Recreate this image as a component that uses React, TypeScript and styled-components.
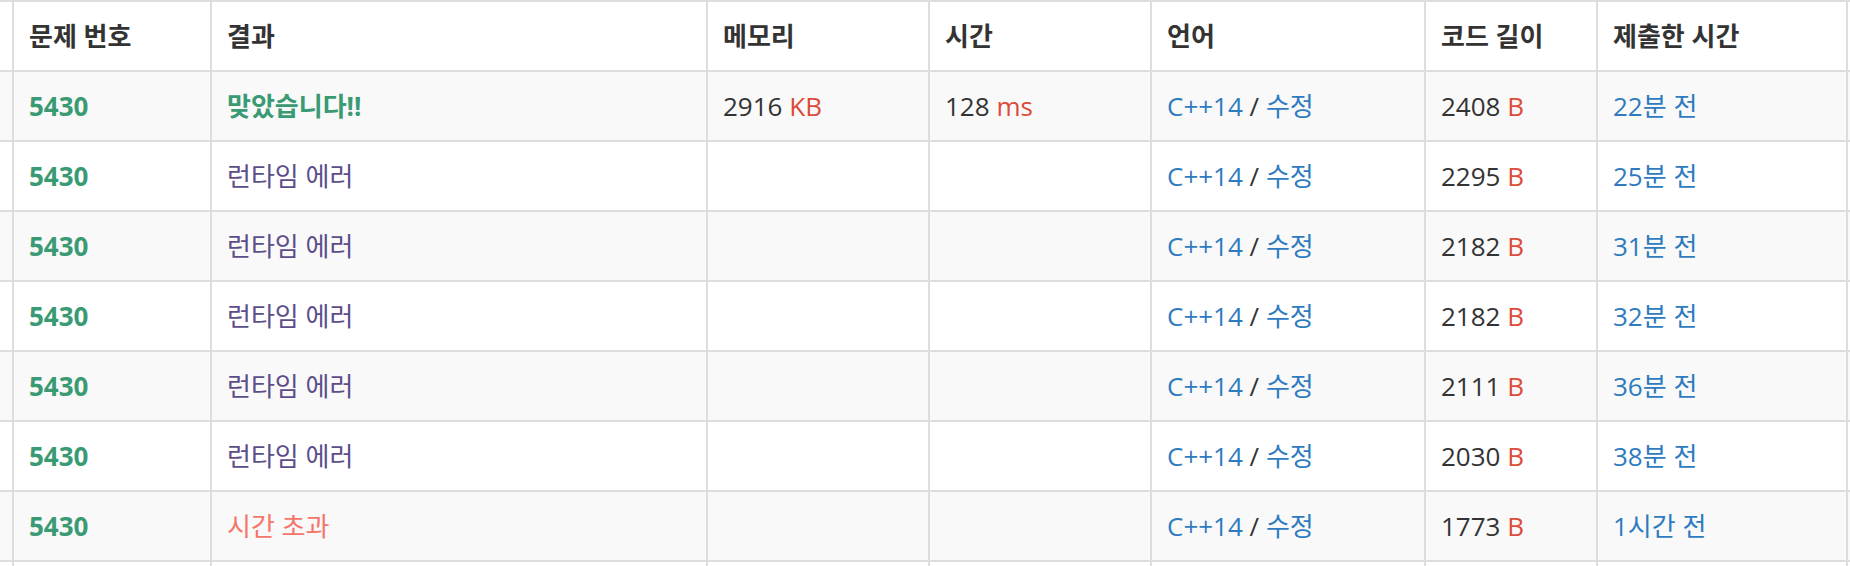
import React from 'react'
import styled, { createGlobalStyle } from 'styled-components'

type Result = 'ac' | 're' | 'tle'

interface Submission {
  problem: string
  result: Result
  memory?: number
  time?: number
  language: string
  length: number
  submitted: string
}

const RESULT_TEXT: Record<Result, string> = {
  ac: '맞았습니다!!',
  re: '런타임 에러',
  tle: '시간 초과',
}

const RESULT_COLOR: Record<Result, string> = {
  ac: '#3a9a74',
  re: '#5c4d8a',
  tle: '#f4756a',
}

const submissions: Submission[] = [
  { problem: '5430', result: 'ac', memory: 2916, time: 128, language: 'C++14', length: 2408, submitted: '22분 전' },
  { problem: '5430', result: 're', language: 'C++14', length: 2295, submitted: '25분 전' },
  { problem: '5430', result: 're', language: 'C++14', length: 2182, submitted: '31분 전' },
  { problem: '5430', result: 're', language: 'C++14', length: 2182, submitted: '32분 전' },
  { problem: '5430', result: 're', language: 'C++14', length: 2111, submitted: '36분 전' },
  { problem: '5430', result: 're', language: 'C++14', length: 2030, submitted: '38분 전' },
  { problem: '5430', result: 'tle', language: 'C++14', length: 1773, submitted: '1시간 전' },
]

// table is cut off on both sides, so the first and last columns are just slivers
const COLUMNS = [
  { label: '', width: 14 },
  { label: '문제 번호', width: 198 },
  { label: '결과', width: 496 },
  { label: '메모리', width: 222 },
  { label: '시간', width: 222 },
  { label: '언어', width: 274 },
  { label: '코드 길이', width: 172 },
  { label: '제출한 시간', width: 250 },
  { label: '', width: 22 },
]

const GlobalStyle = createGlobalStyle`
  html, body {
    margin: 0;
    padding: 0;
    background: #fff;
    overflow: hidden;
  }
  body {
    font-family: "Open Sans", "Noto Sans CJK KR", sans-serif;
    font-size: 26px;
    color: #333;
  }
`

const Wrapper = styled.div`
  width: 1850px;
  height: 566px;
  overflow: hidden;
`

const Table = styled.table`
  width: 1870px;
  table-layout: fixed;
  border-collapse: separate;
  border-spacing: 0;
`

const Cell = styled.td`
  box-sizing: border-box;
  height: 70px;
  padding: 0 15px;
  border-right: 2px solid #ddd;
  border-bottom: 2px solid #ddd;
  vertical-align: middle;
  white-space: nowrap;
  overflow: hidden;
  line-height: 38px;
`

const EdgeCell = styled(Cell)`
  padding: 0;
`

const HeadCell = styled.th<{ $w: number; $edge?: boolean }>`
  box-sizing: border-box;
  width: ${(p) => p.$w}px;
  height: 72px;
  padding: ${(p) => (p.$edge ? '0' : '0 15px')};
  border-top: 2px solid #ddd;
  border-right: 2px solid #ddd;
  border-bottom: 2px solid #ddd;
  vertical-align: middle;
  text-align: left;
  white-space: nowrap;
  overflow: hidden;
  line-height: 38px;
  font-weight: 700;
  color: #333;
`

const Row = styled.tr<{ $striped: boolean }>`
  background: ${(p) => (p.$striped ? '#f9f9f9' : '#fff')};
`

const ProblemLink = styled.a`
  color: #3a9a74;
  font-weight: 700;
  text-decoration: none;
`

const ResultText = styled.span<{ $result: Result }>`
  color: ${(p) => RESULT_COLOR[p.$result]};
  font-weight: ${(p) => (p.$result === 'ac' ? 700 : 400)};
`

const Unit = styled.span`
  color: #dd4b39;
`

const BlueLink = styled.a`
  color: #2f7bbf;
  text-decoration: none;
`

export default function App() {
  return (
    <Wrapper>
      <GlobalStyle />
      <Table>
        <thead>
          <tr>
            {COLUMNS.map((col, i) => (
              <HeadCell key={i} $w={col.width} $edge={!col.label}>
                {col.label}
              </HeadCell>
            ))}
          </tr>
        </thead>
        <tbody>
          {submissions.map((s, i) => (
            <Row key={i} $striped={i % 2 === 0}>
              <EdgeCell />
              <Cell>
                <ProblemLink href="#">{s.problem}</ProblemLink>
              </Cell>
              <Cell>
                <ResultText $result={s.result}>{RESULT_TEXT[s.result]}</ResultText>
              </Cell>
              <Cell>
                {s.memory !== undefined && (
                  <>
                    {s.memory} <Unit>KB</Unit>
                  </>
                )}
              </Cell>
              <Cell>
                {s.time !== undefined && (
                  <>
                    {s.time} <Unit>ms</Unit>
                  </>
                )}
              </Cell>
              <Cell>
                <BlueLink href="#">{s.language}</BlueLink> / <BlueLink href="#">수정</BlueLink>
              </Cell>
              <Cell>
                {s.length} <Unit>B</Unit>
              </Cell>
              <Cell>
                <BlueLink href="#">{s.submitted}</BlueLink>
              </Cell>
              <EdgeCell />
            </Row>
          ))}
          <Row $striped={false}>
            {COLUMNS.map((_, i) => (
              <EdgeCell key={i} />
            ))}
          </Row>
        </tbody>
      </Table>
    </Wrapper>
  )
}
